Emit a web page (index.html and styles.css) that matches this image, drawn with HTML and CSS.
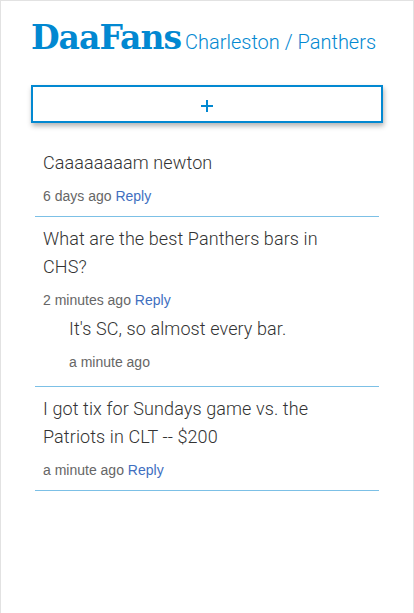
FILE: index.html
```html
<!DOCTYPE html>
<html>
<head>
<meta charset="utf-8">
<link rel="stylesheet" href="styles.css">
</head>
<body>
<div class="page">
  <header class="header">
    <h1 class="brand">DaaFans</h1>
    <span class="location">Charleston / Panthers</span>
  </header>
  <button class="add-btn" type="button" aria-label="Add">
    <svg width="12" height="12" viewBox="0 0 12 12"><path d="M6 0v12M0 6h12" stroke="#0288d1" stroke-width="2" fill="none"/></svg>
  </button>
  <ul class="comments">
    <li class="comment">
      <p class="text">Caaaaaaaam newton</p>
      <div class="meta">6 days ago <a class="reply" href="#">Reply</a></div>
    </li>
    <li class="comment">
      <p class="text">What are the best Panthers bars in CHS?</p>
      <div class="meta">2 minutes ago <a class="reply" href="#">Reply</a></div>
      <div class="subcomment">
        <p class="text">It's SC, so almost every bar.</p>
        <div class="meta">a minute ago</div>
      </div>
    </li>
    <li class="comment">
      <p class="text">I got tix for Sundays game vs. the Patriots in CLT -- $200</p>
      <div class="meta">a minute ago <a class="reply" href="#">Reply</a></div>
    </li>
  </ul>
</div>
</body>
</html>
```

FILE: styles.css
```css
html, body {
  margin: 0;
  padding: 0;
  background: #fff;
}
.page {
  box-sizing: border-box;
  width: 414px;
  min-height: 700px;
  border: 1px solid #e2e2e2;
  border-bottom: none;
  padding: 0 30px;
}
.header {
  display: flex;
  align-items: baseline;
  gap: 4px;
  padding-top: 17px;
  height: 84px;
  box-sizing: border-box;
}
.brand {
  margin: 0;
  font-family: "DejaVu Serif", serif;
  font-weight: bold;
  font-size: 33px;
  letter-spacing: -1px;
  line-height: 40px;
  color: #0288d1;
}
.location {
  font-family: Roboto, sans-serif;
  font-weight: 300;
  font-size: 20px;
  color: #0288d1;
}
.add-btn {
  display: flex;
  align-items: center;
  justify-content: center;
  box-sizing: border-box;
  width: 352px;
  height: 38px;
  margin: 0;
  padding: 3px 0 0;
  background: #fff;
  border: 2px solid #0288d1;
  border-radius: 0;
  box-shadow: 1px 3px 5px rgba(0, 0, 0, 0.3);
}
.comments {
  list-style: none;
  margin: 18px 4px 0;
  padding: 0;
}
.comment {
  padding: 8px 30px 10px 8px;
  border-bottom: 1px solid #7cc0e6;
}
.text {
  margin: 0;
  font-family: Roboto, sans-serif;
  font-weight: 300;
  font-size: 18px;
  letter-spacing: 0.1px;
  line-height: 28px;
  color: #333;
}
.meta {
  margin-top: 9px;
  font-family: "Liberation Sans", Arial, sans-serif;
  font-size: 14px;
  line-height: 20px;
  color: #666;
}
.reply {
  color: #3f6fbf;
  text-decoration: none;
}
.subcomment {
  padding: 5px 0 4px 26px;
}
```
